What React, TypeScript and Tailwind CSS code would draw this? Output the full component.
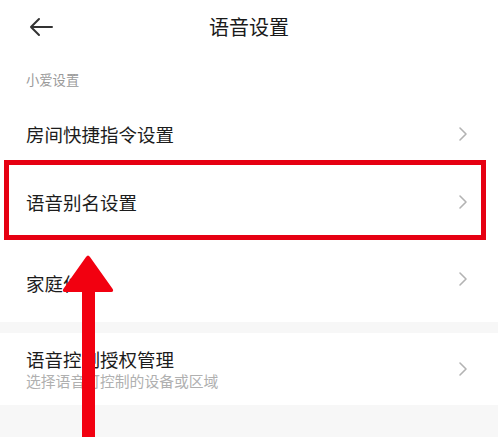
import React from "react";

function Chevron() {
  return (
    <svg width="10" height="16" viewBox="0 0 10 16" className="shrink-0">
      <path d="M2 2 L8 8 L2 14" fill="none" stroke="#b3b3b3" strokeWidth="1.6" strokeLinecap="round" strokeLinejoin="round" />
    </svg>
  );
}

function Row({ title, className }: { title: string; className: string }) {
  return (
    <div className={`flex justify-between pl-[26px] pr-[30px] ${className}`}>
      <span className="text-[18.5px] leading-6 text-[#1c1c1c]">{title}</span>
      <Chevron />
    </div>
  );
}

export default function App() {
  return (
    <div
      className="relative h-[437px] w-[498px] overflow-hidden bg-[#f7f7f7]"
      style={{ fontFamily: '"Noto Sans CJK SC", "Noto Sans", sans-serif' }}
    >
      <div className="bg-white">
        {/* 顶栏 */}
        <div className="relative flex h-[54px] items-center justify-center">
          <svg width="26" height="20" viewBox="0 0 26 20" className="absolute left-[28px] top-[17px]">
            <path d="M24 10 H3 M11 2 L3 10 L11 18" fill="none" stroke="#333" strokeWidth="2" strokeLinecap="round" strokeLinejoin="round" />
          </svg>
          <span className="text-[20px] leading-7 text-[#1a1a1a]">语音设置</span>
        </div>

        {/* 小爱设置 */}
        <div className="flex h-[46px] items-center pl-[26px] pt-[6px] text-[13.3px] text-[#9a9a9a]">
          小爱设置
        </div>
        <Row title="房间快捷指令设置" className="h-[68px] items-center" />
        <Row title="语音别名设置" className="h-[68px] items-center" />
        <Row title="家庭位置" className="h-[86px] items-start pt-[35px]" />
      </div>

      <div className="h-[11px]" />

      <div className="flex h-[72px] items-center justify-between bg-white pl-[26px] pr-[30px]">
        <div className="flex flex-col">
          <span className="text-[18.5px] leading-6 text-[#1c1c1c]">语音控制授权管理</span>
          <span className="text-[14.8px] leading-5 text-[#b0b0b0]">选择语音可控制的设备或区域</span>
        </div>
        <Chevron />
      </div>

      {/* 标注 */}
      <div className="absolute left-[4px] top-[160px] h-[80px] w-[482px] border-[5px] border-[#e60012]" />
      <svg width="60" height="190" viewBox="0 0 60 190" className="absolute left-[58px] top-[252px]">
        <path
          d="M24 40 H8 Q3 40 6 36 L28 5 Q30 2 32 5 L54 36 Q57 40 52 40 H37 V190 H24 Z"
          fill="#f20010"
        />
      </svg>
    </div>
  );
}
